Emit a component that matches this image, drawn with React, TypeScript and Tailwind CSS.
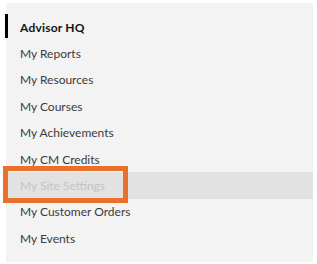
import React from "react";

const items = [
  { label: "Advisor HQ", active: true },
  { label: "My Reports" },
  { label: "My Resources" },
  { label: "My Courses" },
  { label: "My Achievements" },
  { label: "My CM Credits" },
  { label: "My Site Settings", disabled: true },
  { label: "My Customer Orders" },
  { label: "My Events" },
];

export default function App() {
  return (
    <div
      className="relative w-[317px] h-[264px] bg-white pt-[3px] pl-[6px]"
      style={{ fontFamily: "Lato, 'Open Sans', sans-serif" }}
    >
      <nav className="relative w-[307px] h-[259px] bg-[#f3f3f3] pt-[11px]">
        <ul className="flex flex-col">
          {items.map((it) => (
            <li
              key={it.label}
              className={
                "relative flex items-center h-[26.4px] pl-[14px] pt-[1px] text-[12px] " +
                (it.active
                  ? "font-bold text-[#141414] tracking-[0.2px]"
                  : it.disabled
                  ? "bg-[#e2e2e2] text-[#c4c4c4]"
                  : "text-[#3b3b3b]")
              }
            >
              {it.active && (
                <span className="absolute left-[-1px] top-0 w-[3px] h-[24px] bg-black" />
              )}
              {it.label}
            </li>
          ))}
        </ul>
      </nav>
      <div className="absolute left-[3px] top-[166px] w-[125px] h-[37px] border-[5px] border-[#e8702a]" />
    </div>
  );
}
